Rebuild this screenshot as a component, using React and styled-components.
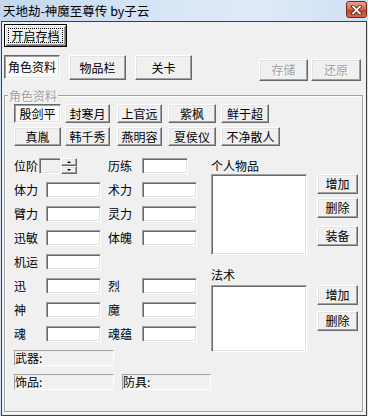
import React from 'react';
import styled, { createGlobalStyle, css } from 'styled-components';

const GlobalStyle = createGlobalStyle`
  html, body {
    margin: 0;
    padding: 0;
    background: #d4e3f5;
  }
  body {
    font-family: "Noto Sans CJK SC", "Liberation Sans", sans-serif;
    font-size: 12px;
    color: #000;
  }
`;

const raised = css`
  border: 1px solid;
  border-color: #fff #696969 #696969 #fff;
  box-shadow: inset -1px -1px 0 #a0a0a0, inset 1px 1px 0 #e3e3e3;
`;

const sunken = css`
  border: 1px solid;
  border-color: #696969 #fff #fff #696969;
  box-shadow: inset 1px 1px 0 #a0a0a0, inset -1px -1px 0 #e3e3e3;
`;

const Window = styled.div`
  width: 368px;
  height: 416px;
  overflow: hidden;
  background: #d4e3f5;
  display: flex;
  flex-direction: column;
`;

const TitleBar = styled.div`
  height: 21px;
  flex: none;
  display: flex;
  justify-content: space-between;
  align-items: flex-start;
  background: linear-gradient(to right, #c3d8ef 0%, #d8e6f6 45%, #dfeaf8 70%, #cfe0f3 100%);
`;

const TitleText = styled.div`
  padding: 3px 0 0 3px;
  font-size: 12.5px;
  line-height: 15px;
  color: #000;
`;

const CloseBtn = styled.div`
  width: 21px;
  height: 17px;
  margin: 1px 1px 0 0;
  box-sizing: border-box;
  border: 1px solid #6b2a1e;
  border-radius: 3px;
  background: linear-gradient(#e8a08d 0%, #d86f56 45%, #c1442a 55%, #d5664b 100%);
  display: flex;
  align-items: center;
  justify-content: center;
`;

const Client = styled.div`
  margin-left: 1px;
  width: 366px;
  height: 395px;
  box-sizing: border-box;
  border: 1px solid #3f3f3f;
  background: #f0f0f0;
  padding: 2px 3px 0 2px;
  display: flex;
  flex-direction: column;
`;

const Button = styled.button`
  box-sizing: border-box;
  width: ${p => p.$w}px;
  height: ${p => p.$h || 20}px;
  padding: 0;
  margin: ${p => p.$mt || 0}px 0 0 0;
  font-family: inherit;
  font-size: 12px;
  line-height: 12px;
  color: #000;
  background: #f0f0f0;
  display: flex;
  align-items: center;
  justify-content: center;
  ${raised}
  ${p => p.$pressed && css`
    background: #fbfbfb;
    ${sunken}
  `}
  ${p => p.disabled && css`
    color: #a0a0a0;
    text-shadow: 1px 1px 0 #fff;
  `}
`;

const DefaultButton = styled(Button)`
  border: 1px solid #000;
  box-shadow: inset 1px 1px 0 #fff, inset -1px -1px 0 #696969, inset 2px 2px 0 #e3e3e3, inset -2px -2px 0 #a0a0a0;
  padding: 3px;
`;

const FocusRing = styled.span`
  flex: 1;
  align-self: stretch;
  border: 1px dotted #000;
  display: flex;
  align-items: center;
  justify-content: center;
`;

const TabRow = styled.div`
  margin-top: 8px;
  height: 26px;
  display: flex;
  align-items: flex-start;
  gap: 9px;
`;

const SaveGroup = styled.div`
  margin: 4px 2px 0 auto;
  display: flex;
  gap: 3px;
`;

const Group = styled.div`
  position: relative;
  margin-top: 14px;
  height: 317px;
  box-sizing: border-box;
  border: 1px solid #a0a0a0;
  box-shadow: inset 1px 1px 0 #fff, 1px 1px 0 #fff;
  padding: 8px 0 0 9px;
`;

const Legend = styled.div`
  position: absolute;
  top: -8px;
  left: 3px;
  padding: 0 1px;
  background: #f0f0f0;
  line-height: 15px;
  color: #a0a0a0;
  text-shadow: 1px 1px 0 #fff;
`;

const CharGrid = styled.div`
  display: grid;
  grid-template-columns: 51px 52px 51px 53px auto;
  row-gap: 4px;
`;

const Body = styled.div`
  margin-top: 12px;
  display: flex;
`;

const LeftCol = styled.div`
  width: 197px;
  display: flex;
  flex-direction: column;
  gap: 8px;
`;

const StatsGrid = styled.div`
  display: grid;
  grid-template-columns: 32px 62px 34px 55px;
  grid-auto-rows: 16px;
  row-gap: 8px;
  align-items: center;
`;

const Label = styled.span`
  line-height: 16px;
  white-space: nowrap;
`;

const Edit = styled.input`
  box-sizing: border-box;
  width: ${p => p.$w || 55}px;
  height: 16px;
  margin: 0;
  padding: 0;
  outline: none;
  background: #fff;
  font: inherit;
  border: 1px solid;
  border-color: #a0a0a0 #fff #fff #a0a0a0;
  box-shadow: inset 1px 1px 0 #696969, inset -1px -1px 0 #e3e3e3;
`;

const Spinner = styled.div`
  display: flex;
  margin-left: -7px;
`;

const SpinEdit = styled(Edit)`
  background: #f0f0f0;
`;

const SpinButtons = styled.div`
  display: flex;
  flex-direction: column;
`;

const SpinBtn = styled.div`
  box-sizing: border-box;
  width: 16px;
  height: 8px;
  background: #f0f0f0;
  ${raised}
  display: flex;
  align-items: center;
  justify-content: center;
  &::after {
    content: '';
    border-left: 2px solid transparent;
    border-right: 2px solid transparent;
    ${p => p.$down
      ? css`border-top: 2px solid #000;`
      : css`border-bottom: 2px solid #000;`}
  }
`;

const InfoRow = styled.div`
  display: flex;
  gap: 8px;
`;

const InfoBox = styled.div`
  box-sizing: border-box;
  width: ${p => p.$w}px;
  height: 16px;
  border: 1px solid;
  border-color: #a0a0a0 #fff #fff #a0a0a0;
  background: #f0f0f0;
  line-height: 14px;
  white-space: nowrap;
`;

const RightCol = styled.div`
  display: flex;
  flex-direction: column;
`;

const SectionLabel = styled.div`
  line-height: 16px;
  margin-top: ${p => p.$mt || 0}px;
  margin-bottom: ${p => p.$mb || 0}px;
`;

const SectionRow = styled.div`
  display: flex;
  gap: 10px;
  align-items: flex-start;
`;

const ListBox = styled.div`
  box-sizing: border-box;
  width: 96px;
  height: ${p => p.$h}px;
  background: #fff;
  border: 1px solid;
  border-color: #a0a0a0 #fff #fff #a0a0a0;
  box-shadow: inset 1px 1px 0 #696969, inset -1px -1px 0 #e3e3e3;
`;

const ButtonCol = styled.div`
  display: flex;
  flex-direction: column;
  gap: ${p => p.$gap}px;
`;

const CloseIcon = () => (
  <svg width="11" height="10" viewBox="0 0 11 10">
    <path d="M2 1.5 L9 8.5 M9 1.5 L2 8.5" stroke="#4a1a10" strokeWidth="3.4" strokeLinecap="square" />
    <path d="M2 1.5 L9 8.5 M9 1.5 L2 8.5" stroke="#fff" strokeWidth="1.8" strokeLinecap="square" />
  </svg>
);

const chars = [
  { name: '殷剑平', w: 47, on: true },
  { name: '封寒月', w: 45 },
  { name: '上官远', w: 45 },
  { name: '紫枫', w: 48 },
  { name: '鲜于超', w: 48 },
  { name: '真胤', w: 47 },
  { name: '韩千秀', w: 45 },
  { name: '燕明容', w: 45 },
  { name: '夏侯仪', w: 48 },
  { name: '不净散人', w: 59 },
];

const stats = [
  ['体力', '术力'],
  ['臂力', '灵力'],
  ['迅敏', '体魄'],
  ['机运', null],
  ['迅', '烈'],
  ['神', '魔'],
  ['魂', '魂蕴'],
];

export default function App() {
  return (
    <Window>
      <GlobalStyle />
      <TitleBar>
        <TitleText>天地劫-神魔至尊传 by子云</TitleText>
        <CloseBtn><CloseIcon /></CloseBtn>
      </TitleBar>
      <Client>
        <DefaultButton $w={63} $h={23}>
          <FocusRing>开启存档</FocusRing>
        </DefaultButton>
        <TabRow>
          <Button $w={56} $h={24} $pressed>角色资料</Button>
          <Button $w={57} $h={25}>物品栏</Button>
          <Button $w={57} $h={25}>关卡</Button>
          <SaveGroup>
            <Button $w={49} $h={22} disabled>存储</Button>
            <Button $w={50} $h={22} disabled>还原</Button>
          </SaveGroup>
        </TabRow>
        <Group>
          <Legend>角色资料</Legend>
          <CharGrid>
            {chars.map(c => (
              <Button key={c.name} $w={c.w} $h={19} $pressed={c.on}>{c.name}</Button>
            ))}
          </CharGrid>
          <Body>
            <LeftCol>
              <StatsGrid>
                <Label>位阶</Label>
                <Spinner>
                  <SpinEdit $w={22} readOnly />
                  <SpinButtons>
                    <SpinBtn />
                    <SpinBtn $down />
                  </SpinButtons>
                </Spinner>
                <Label>历练</Label>
                <Edit $w={46} readOnly />
                {stats.map(([a, b]) => (
                  <React.Fragment key={a}>
                    <Label>{a}</Label>
                    <Edit readOnly />
                    {b ? <Label>{b}</Label> : <span />}
                    {b ? <Edit readOnly /> : <span />}
                  </React.Fragment>
                ))}
              </StatsGrid>
              <InfoBox $w={100}>武器:</InfoBox>
              <InfoRow>
                <InfoBox $w={100}>饰品:</InfoBox>
                <InfoBox $w={89}>防具:</InfoBox>
              </InfoRow>
            </LeftCol>
            <RightCol>
              <SectionLabel>个人物品</SectionLabel>
              <SectionRow>
                <ListBox $h={81} />
                <ButtonCol $gap={4}>
                  <Button $w={41}>增加</Button>
                  <Button $w={41}>删除</Button>
                  <Button $w={41} $mt={4}>装备</Button>
                </ButtonCol>
              </SectionRow>
              <SectionLabel $mt={12} $mb={2}>法术</SectionLabel>
              <SectionRow>
                <ListBox $h={67} />
                <ButtonCol $gap={6}>
                  <Button $w={41}>增加</Button>
                  <Button $w={41}>删除</Button>
                </ButtonCol>
              </SectionRow>
            </RightCol>
          </Body>
        </Group>
      </Client>
    </Window>
  );
}
